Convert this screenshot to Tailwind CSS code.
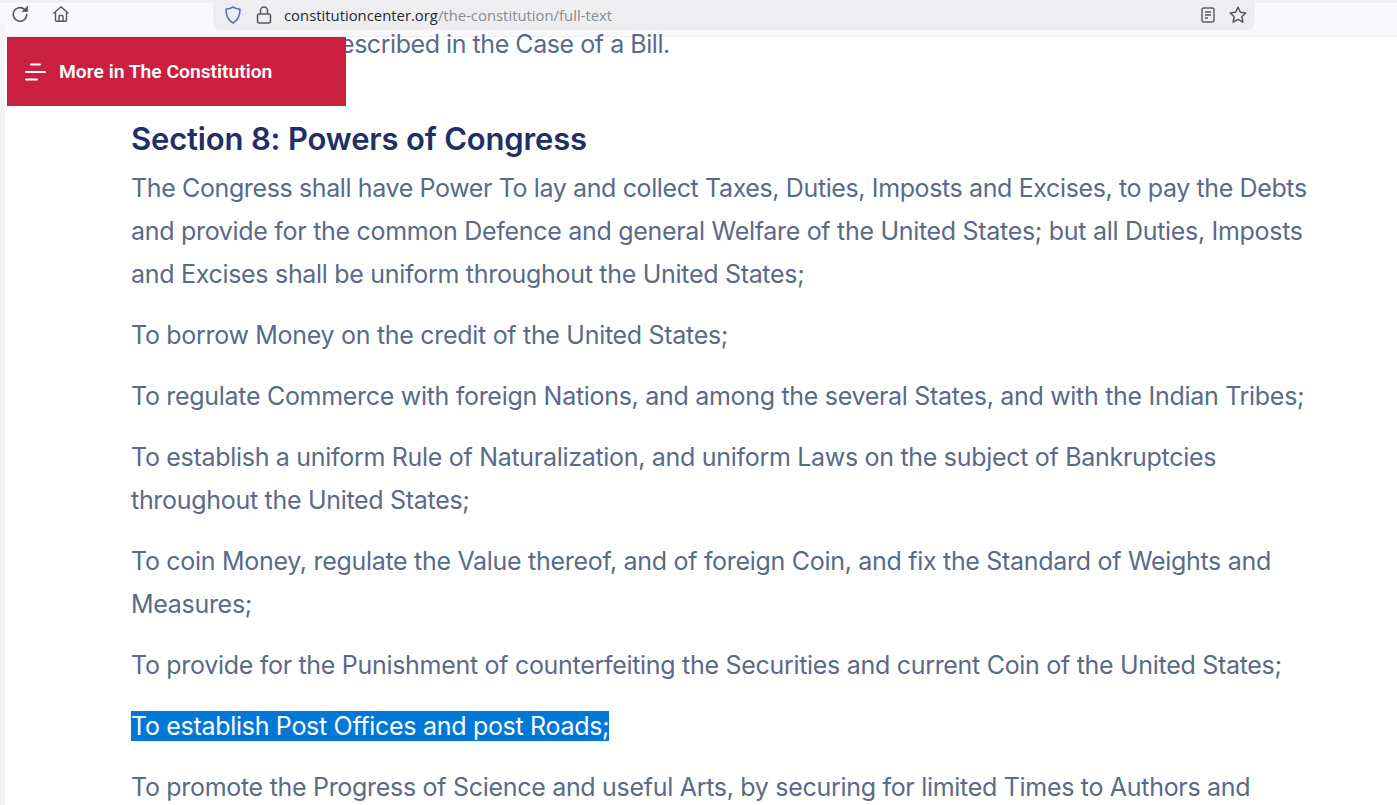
<!DOCTYPE html>
<html lang="en">
<head>
	<meta charset="UTF-8">
	<title>Full Text of The Constitution</title>
	<script src="https://cdn.jsdelivr.net/npm/@tailwindcss/browser@4"></script>
</head>
<body class="relative h-[805px] w-[1397px] overflow-hidden bg-white font-['Inter',sans-serif]">

	<!-- Browser toolbar -->
	<header class="flex h-[37px] items-start border-t-[3px] border-b border-t-[#f0f0f3] border-b-[#ececf0] bg-[#f9f9fb]">
		<div class="flex h-[22px] w-[213px] items-center gap-[21px] pl-[10px]">
			<svg class="h-[20px] w-[20px]" viewBox="0 0 20 20" fill="none" stroke="#55555a" stroke-width="1.6" stroke-linecap="round" stroke-linejoin="round"><path d="M16.800 10.500a6.800 6.800 0 1 1-2.300-5.200"/><path d="M17.500 2.500v5h-5Z" fill="#55555a" stroke-width="0.8"/></svg>
			<svg class="h-[20px] w-[20px]" viewBox="0 0 20 20" fill="none" stroke="#55555a" stroke-width="1.4" stroke-linejoin="round"><path d="M2.500 9.500 10 2.800l7.500 6.700M4.500 8v8.200a1 1 0 0 0 1 1h9a1 1 0 0 0 1-1V8"/><path d="M8 17v-4.500a1 1 0 0 1 1-1h2a1 1 0 0 1 1 1V17"/></svg>
		</div>
		<div class="-mt-[3px] flex h-[30px] w-[1042px] items-center rounded-b-[8px] bg-[#eeeef1] pl-[10px]">
			<svg class="h-[20px] w-[20px]" viewBox="0 0 20 20" fill="none" stroke="#5b6bc9" stroke-width="1.6" stroke-linejoin="round"><path d="M10 2c2.400 1.500 4.600 2 7 2.200 0 6.500-1.800 11-7 13.800C4.800 15.200 3 10.700 3 4.200 5.400 4 7.600 3.500 10 2Z"/></svg>
			<svg class="ml-[11px] h-[20px] w-[20px]" viewBox="0 0 20 20" fill="none" stroke="#55555a" stroke-width="1.5"><rect x="3.500" y="9" width="13" height="9" rx="2"/><path d="M6.500 9V5.500a3.500 3.500 0 0 1 7 0V9"/></svg>
			<div class="ml-[10px] mt-[1px] text-[14.850px] leading-none text-[#8a8a90] font-['Open_Sans',sans-serif]"><span class="text-[#26262b]">constitutioncenter.org</span>/the-constitution/full-text</div>
			<svg class="ml-auto h-[18px] w-[18px]" viewBox="0 0 18 18" fill="none" stroke="#5b5b60" stroke-width="1.4"><rect x="3" y="2" width="12" height="14" rx="2"/><path d="M6 6h6M6 9h6M6 12h3"/></svg>
			<svg class="ml-[11px] mr-[7px] h-[20px] w-[20px]" viewBox="0 0 20 20" fill="none" stroke="#55555a" stroke-width="1.5" stroke-linejoin="round"><path d="m10 2.300 2.400 5 5.400.7-4 3.700 1.100 5.400L10 14.400l-4.900 2.700 1.100-5.400-4-3.700 5.400-.7Z"/></svg>
		</div>
	</header>

	<!-- Red section menu, sits over the article -->
	<div class="absolute left-[7px] top-[37px] flex h-[69px] w-[339px] items-center gap-[13px] bg-[#cb1f3f] pl-[18px]">
		<svg class="h-[20px] w-[21px]" viewBox="0 0 21 20" fill="none" stroke="#ffffff" stroke-width="2" stroke-linecap="round"><path d="M6 2.500h9M1 10h19M1 17.500h11"/></svg>
		<span class="mt-[1px] text-[19.250px] font-semibold text-white font-['Roboto',sans-serif]">More in The Constitution</span>
	</div>

	<!-- Article -->
	<main class="border-l-[5px] border-[#f4f4f6] pl-[126px] text-[25px] leading-[43px] tracking-[-0.3px] text-[#5a6a87] whitespace-nowrap">
		<p class="-mt-[14px]"><span class="pl-[209px] tracking-[-0.45px]">escribed in the Case of a Bill.</span></p>
		<h2 class="mt-[54px] text-[31px] font-semibold leading-[37px] tracking-[-0.17px] text-[#222f66]">Section 8: Powers of Congress</h2>
		<p class="mt-[10px]"><span class="tracking-[-0.38px]">The Congress shall have Power To lay and collect Taxes, Duties, Imposts and Excises, to pay the Debts</span><br>and provide for the common Defence and general Welfare of the United States; but all Duties, Imposts<br>and Excises shall be uniform throughout the United States;</p>
		<p class="mt-[18px]">To borrow Money on the credit of the United States;</p>
		<p class="mt-[18px]">To regulate Commerce with foreign Nations, and among the several States, and with the Indian Tribes;</p>
		<p class="mt-[18px]">To establish a uniform Rule of Naturalization, and uniform Laws on the subject of Bankruptcies<br>throughout the United States;</p>
		<p class="mt-[18px]">To coin Money, regulate the Value thereof, and of foreign Coin, and fix the Standard of Weights and<br>Measures;</p>
		<p class="mt-[18px]">To provide for the Punishment of counterfeiting the Securities and current Coin of the United States;</p>
		<p class="mt-[18px]"><span class="bg-[#0078d7] text-white">To establish Post Offices and post Roads;</span></p>
		<p class="mt-[18px]">To promote the Progress of Science and useful Arts, by securing for limited Times to Authors and</p>
	</main>

</body>
</html>
